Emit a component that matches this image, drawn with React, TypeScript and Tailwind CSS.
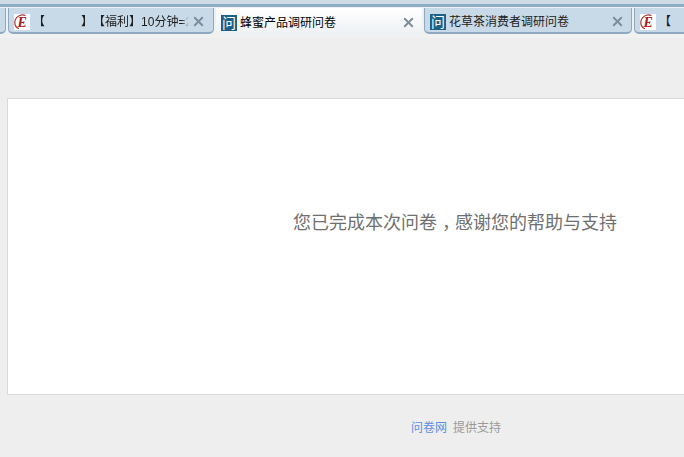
import React from 'react';
import { X } from 'lucide-react';

const cjk = { fontFamily: '"Liberation Sans", "Noto Sans CJK SC", sans-serif' };

const WenIcon = () => (
  <span className="flex h-4 w-4 shrink-0 items-center justify-center bg-[#1d5f85] text-[14px] leading-none text-white">问</span>
);

const EIcon = () => (
  <span className="flex h-4 w-4 shrink-0 items-center justify-center bg-white">
    <svg width="16" height="16" viewBox="0 0 16 16" fill="none">
      <path d="M11.5 1.5C6 -.5 .8 3.500 .8 8.500c0 3 1.700 5.200 4.200 6.300" stroke="#a83232" strokeWidth="1.200" />
      <text x="3.500" y="13" fontSize="14" fontStyle="italic" fontWeight="700" fill="#a82020" style={{ fontFamily: '"Liberation Serif", serif' }}>E</text>
    </svg>
  </span>
);

type TabProps = {
  icon: React.ReactNode;
  children: React.ReactNode;
  size: string;
  active?: boolean;
  closable?: boolean;
  fade?: boolean;
};

const Tab = ({ icon, children, size, active, closable = true, fade }: TabProps) => (
  <div
    className={`flex h-[26px] shrink-0 items-center rounded-b-[5px] pl-[5px] pt-[3px] ${size} ${
      active
        ? 'bg-gradient-to-b from-[#ffffff] to-[#eef1f4]'
        : 'border-x border-b-2 border-[#8fa9c0] bg-[#c8d9e7]'
    }`}
  >
    {icon}
    <span
      className={`ml-[3px] flex min-w-0 flex-1 overflow-hidden whitespace-nowrap text-xs ${active ? 'text-black' : 'text-[#1c1c1c]'} ${
        fade ? '[mask-image:linear-gradient(to_right,black_95%,transparent)]' : ''
      }`}
    >
      {children}
    </span>
    {closable && <X size={15} strokeWidth={3} className="ml-[2px] shrink-0 text-[#7f8c98]" />}
  </div>
);

export default function App() {
  return (
    <div className="flex h-[457px] w-[684px] flex-col overflow-hidden bg-[#eeeeee]" style={cjk}>
      <div className="h-[38px] shrink-0 bg-gradient-to-b from-[#eaf0f5] to-[#f1f1f1]">
        <div className="h-1 bg-[#cfdce6]" />
        <div className="h-[3px] bg-[#8eaec6]" />
        <div className="flex gap-[2px] pt-px">
          <div className="h-[26px] w-[6px] shrink-0 rounded-br-[5px] border-r border-b-2 border-[#8fa9c0] bg-[#c8d9e7]" />
          <Tab icon={<EIcon />} size="w-[206px] pr-[7px]" fade>
            <span>【</span>
            <span className="ml-[36px]">】</span>
            <span>【福利】</span>
            <span>10分钟=2</span>
          </Tab>
          <Tab icon={<WenIcon />} size="w-[206px] pr-[6px]" active>蜂蜜产品调研问卷</Tab>
          <Tab icon={<WenIcon />} size="w-[208px] pr-[6px]">花草茶消费者调研问卷</Tab>
          <Tab icon={<EIcon />} size="w-[60px] pr-[6px]" closable={false}>【</Tab>
        </div>
      </div>

      <main className="ml-[7px] mt-[60px] h-[297px] w-[700px] shrink-0 border border-[#d9d9d9] bg-white pl-[285px] pt-[114px]">
        <p className="text-lg leading-5 text-[#6f6f6f]">
          您已完成本次问卷<span className="pl-[5px] tracking-[-5px]">，</span>感谢您的帮助与支持
        </p>
      </main>

      <footer className="mt-[25px] flex pl-[411px] text-xs">
        <a className="text-[#5f8ee0]">问卷网</a>
        <span className="ml-[6px] text-[#999999]">提供支持</span>
      </footer>
    </div>
  );
}
